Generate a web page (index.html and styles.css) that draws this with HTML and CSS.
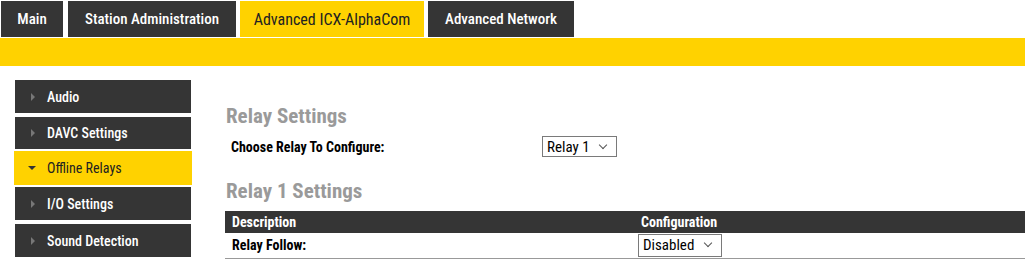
FILE: index.html
```html
<!DOCTYPE html>
<html lang="en">

<head>
    <meta charset="UTF-8">
    <title>Advanced ICX-AlphaCom</title>
    <link rel="stylesheet" href="styles.css">
</head>

<body>
    <div class="tabs">
        <a class="tab">Main</a>
        <a class="tab tab-wide">Station Administration</a>
        <a class="tab active">Advanced ICX-AlphaCom</a>
        <a class="tab">Advanced Network</a>
    </div>
    <div class="band"></div>

    <div class="page">
        <ul class="side-menu">
            <li class="item item-audio"><span class="arrow"></span>Audio</li>
            <li class="item item-davc"><span class="arrow"></span>DAVC Settings</li>
            <li class="item active"><span class="arrow down"></span>Offline Relays</li>
            <li class="item item-io"><span class="arrow"></span>I/O Settings</li>
            <li class="item"><span class="arrow"></span>Sound Detection</li>
        </ul>

        <div class="content">
            <h2>Relay Settings</h2>
            <div class="choose-row">
                <label>Choose Relay To Configure:</label>
                <div class="select select-relay">Relay 1 <span class="chev"></span></div>
            </div>

            <h2 class="second">Relay 1 Settings</h2>
            <table>
                <tr>
                    <th class="col-desc">Description</th>
                    <th>Configuration</th>
                </tr>
                <tr>
                    <td>Relay Follow:</td>
                    <td><div class="select select-follow">Disabled <span class="chev"></span></div></td>
                </tr>
            </table>
        </div>
    </div>
</body>
</html>
```

FILE: styles.css
```css
/* Global styles */
* {
    box-sizing: border-box;
    margin: 0;
    padding: 0;
}

body {
    background-color: white;
    font-family: "Roboto Condensed", Roboto, "Liberation Sans", sans-serif;
    font-size: 14px;
    color: black;
    width: 1025px;
    overflow: hidden;
}

/* Top tabs */
.tabs {
    display: flex;
    height: 37px;
    padding-top: 1px;
    padding-left: 1px;
}

.tab {
    display: flex;
    align-items: center;
    justify-content: center;
    height: 36px;
    background-color: #353535;
    color: white;
    font-size: 15px;
    font-weight: 500;
    margin-right: 5px;
    padding: 0 10px;
}

.tab:nth-child(1) { width: 62px; }
.tab:nth-child(2) { width: 168px; margin-right: 4px; }
.tab:nth-child(3) { width: 184px; margin-right: 4px; }
.tab:nth-child(4) { width: 146px; }

.tab.active {
    background-color: #FFD200;
    color: #222;
    font-size: 16px;
    font-weight: 400;
}

.band {
    height: 28px;
    margin-top: 1px;
    background-color: #FFD200;
}

/* Page body */
.page {
    display: flex;
}

.side-menu {
    list-style: none;
    width: 178px;
    margin-left: 14px;
    margin-top: 14px;
}

.item {
    display: flex;
    align-items: center;
    height: 33px;
    margin: 0 1px 2px 1px;
    background-color: #353535;
    color: white;
    font-weight: 500;
    padding-left: 16px;
}

.item-audio,
.item-io {
    margin-bottom: 4px;
}

.item-davc {
    height: 32px;
}

.item.active {
    height: 34px;
    margin: 0 0 2px 0;
    background-color: #FFD200;
    color: #222;
    font-weight: 400;
    padding-left: 14px;
}

.arrow {
    width: 0;
    height: 0;
    border-top: 4px solid transparent;
    border-bottom: 4px solid transparent;
    border-left: 4px solid #777;
    margin-right: 12px;
}

.arrow.down {
    border-left: 4px solid transparent;
    border-right: 4px solid transparent;
    border-top: 4px solid #333;
    border-bottom: none;
    margin-right: 11px;
}

/* Main content */
.content {
    flex: 1;
    margin-left: 33px;
    padding-top: 37px;
}

h2 {
    color: #9a9a9a;
    font-size: 21px;
    font-weight: 700;
    line-height: 26px;
    height: 32px;
    padding-left: 1px;
}

h2.second {
    margin-top: 20px;
    height: 33px;
}

.choose-row {
    display: flex;
    align-items: center;
    height: 23px;
    padding-left: 6px;
}

.choose-row label {
    width: 311px;
    font-weight: 700;
}

.select {
    display: flex;
    align-items: center;
    border: 1px solid #7a7a7a;
    height: 21px;
    padding-left: 4px;
    font-size: 15px;
    font-weight: 400;
    background-color: white;
}

.select-relay {
    width: 75px;
}

.select-follow {
    width: 84px;
    height: 23px;
}

.chev {
    width: 6px;
    height: 6px;
    border-right: 1px solid #555;
    border-bottom: 1px solid #555;
    transform: rotate(45deg);
    margin-left: auto;
    margin-right: 10px;
    margin-top: -4px;
}

table {
    width: 100%;
    border-collapse: collapse;
}

th {
    background-color: #353535;
    color: white;
    text-align: left;
    height: 22px;
    padding-left: 7px;
    font-weight: 700;
}

th.col-desc {
    width: 409px;
}

td {
    height: 25px;
    padding-left: 7px;
    font-weight: 700;
    border-bottom: 1px solid #999;
}

td:nth-child(2) {
    padding-left: 4px;
}
```
